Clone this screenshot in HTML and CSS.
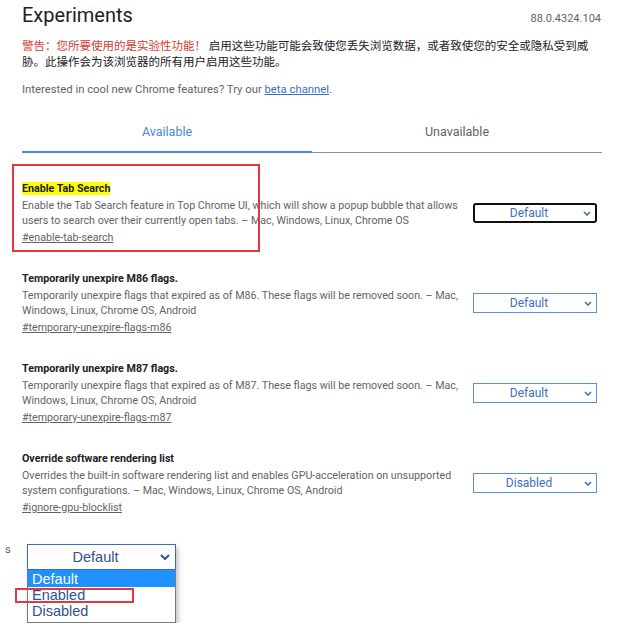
FILE: index.html
```html
<!DOCTYPE html>
<html lang="zh-CN">
<head>
    <meta charset="UTF-8">
    <title>Experiments</title>
    <link rel="stylesheet" href="styles.css">
</head>
<body>
<div class="page">
    <div class="header">
        <h1>Experiments</h1>
        <span class="version">88.0.4324.104</span>
    </div>
    <p class="warning"><span class="warn-red">警告：您所要使用的是实验性功能！</span> 启用这些功能可能会致使您丢失浏览数据，或者致使您的安全或隐私受到威胁。此操作会为该浏览器的所有用户启用这些功能。</p>
    <p class="promo">Interested in cool new Chrome features? Try our <a href="#">beta channel</a>.</p>

    <div class="tabs">
        <div class="tab active">Available</div>
        <div class="tab">Unavailable</div>
    </div>

    <ul class="flags">
        <li class="flag">
            <div class="flag-text">
                <h3><span class="mark">Enable Tab Search</span></h3>
                <p>Enable the Tab Search feature in Top Chrome UI, which will show a popup bubble that allows users to search over their currently open tabs. – Mac, Windows, Linux, Chrome OS</p>
                <a href="#">#enable-tab-search</a>
            </div>
            <div class="select focused">Default
                <svg class="chev" width="8" height="5" viewBox="0 0 8 5"><polyline points="1,1 4,4 7,1" fill="none" stroke="currentColor" stroke-width="1.6"/></svg>
            </div>
            <div class="note-box"></div>
        </li>
        <li class="flag">
            <div class="flag-text">
                <h3>Temporarily unexpire M86 flags.</h3>
                <p>Temporarily unexpire flags that expired as of M86. These flags will be removed soon. – Mac, Windows, Linux, Chrome OS, Android</p>
                <a href="#">#temporary-unexpire-flags-m86</a>
            </div>
            <div class="select">Default
                <svg class="chev" width="8" height="5" viewBox="0 0 8 5"><polyline points="1,1 4,4 7,1" fill="none" stroke="currentColor" stroke-width="1.6"/></svg>
            </div>
        </li>
        <li class="flag">
            <div class="flag-text">
                <h3>Temporarily unexpire M87 flags.</h3>
                <p>Temporarily unexpire flags that expired as of M87. These flags will be removed soon. – Mac, Windows, Linux, Chrome OS, Android</p>
                <a href="#">#temporary-unexpire-flags-m87</a>
            </div>
            <div class="select">Default
                <svg class="chev" width="8" height="5" viewBox="0 0 8 5"><polyline points="1,1 4,4 7,1" fill="none" stroke="currentColor" stroke-width="1.6"/></svg>
            </div>
        </li>
        <li class="flag">
            <div class="flag-text">
                <h3>Override software rendering list</h3>
                <p>Overrides the built-in software rendering list and enables GPU-acceleration on unsupported system configurations. – Mac, Windows, Linux, Chrome OS, Android</p>
                <a href="#">#ignore-gpu-blocklist</a>
            </div>
            <div class="select">Disabled
                <svg class="chev" width="8" height="5" viewBox="0 0 8 5"><polyline points="1,1 4,4 7,1" fill="none" stroke="currentColor" stroke-width="1.6"/></svg>
            </div>
        </li>
    </ul>
</div>

<div class="picker">
    <span class="picker-label">s</span>
    <div class="picker-box">
        <div class="picker-select">Default
            <svg class="chev" width="10" height="6" viewBox="0 0 10 6"><polyline points="1,1 5,5 9,1" fill="none" stroke="currentColor" stroke-width="2"/></svg>
        </div>
        <ul class="picker-list">
            <li class="on">Default</li>
            <li>Enabled</li>
            <li>Disabled</li>
        </ul>
    </div>
    <div class="note-box small"></div>
</div>
</body>
</html>
```

FILE: styles.css
```css
* {
    margin: 0;
    padding: 0;
}

ul {
    list-style: none;
}

body {
    font-family: Roboto, "Noto Sans CJK SC", sans-serif;
    color: #202124;
    background-color: #fff;
}

.page {
    width: 580px;
    padding: 0 32px 0 22px;
}

.header {
    display: flex;
    justify-content: space-between;
    align-items: baseline;
    padding-top: 3px;
}

.header h1 {
    font-size: 20px;
    font-weight: normal;
    line-height: 24px;
}

.version {
    font-size: 11px;
    color: #5f6368;
    margin-right: 1px;
}

.warning {
    margin-top: 11px;
    max-width: 572px;
    font-size: 11.5px;
    line-height: 16px;
    color: #202124;
}

.warn-red {
    color: #d23c32;
}

.promo {
    margin-top: 12px;
    font-size: 11.3px;
    line-height: 16px;
    color: #5f6368;
}

.promo a {
    color: #3b6fc4;
}

.tabs {
    display: flex;
    margin-top: 12px;
}

.tab {
    flex: 1;
    text-align: center;
    font-size: 12.5px;
    line-height: 16px;
    padding: 14px 0 12px;
    color: #5f6368;
    border-bottom: 1px solid #8f9399;
}

.tab.active {
    color: #4f84d4;
    padding-bottom: 11px;
    border-bottom: 2px solid #4a86e0;
}

.flags {
    margin-top: 28px;
}

.flag {
    display: flex;
    align-items: center;
    position: relative;
    margin-bottom: 26px;
}

.flag-text {
    width: 445px;
    font-size: 10.7px;
    line-height: 15px;
}

.flag-text h3 {
    font-size: 10.7px;
    font-weight: bold;
    color: #202124;
    margin-bottom: 2px;
}

.mark {
    background-color: #ffff00;
}

.flag-text p {
    color: #5f6368;
    margin-bottom: 2px;
}

.flag-text a {
    color: #5f6368;
}

.select {
    display: flex;
    align-items: center;
    justify-content: center;
    position: relative;
    width: 110px;
    height: 18px;
    margin-left: auto;
    margin-right: 5px;
    padding-right: 12px;
    box-sizing: content-box;
    border: 1px solid #5b8fd8;
    font-size: 12px;
    color: #3b6fc4;
}

.select.focused {
    border: 2px solid #111;
    border-radius: 3px;
    height: 16px;
    width: 108px;
}

.chev {
    position: absolute;
    right: 4px;
    top: 50%;
    margin-top: -2px;
}

.note-box {
    position: absolute;
    left: -10px;
    top: -17px;
    width: 244px;
    height: 84px;
    border: 2px solid #e0383e;
}

.picker {
    position: relative;
    display: flex;
    margin-top: 29px;
    padding-left: 5px;
}

.picker-label {
    width: 22px;
    font-size: 11px;
    line-height: 12px;
    color: #5f6368;
}

.picker-box {
    width: 149px;
    font-family: "Liberation Sans", Arial, sans-serif;
    box-shadow: 2px 3px 5px rgba(0, 0, 0, 0.25);
}

.picker-select {
    position: relative;
    height: 24px;
    line-height: 24px;
    border: 1px solid #3d6bb6;
    text-align: center;
    padding-right: 12px;
    font-size: 14.5px;
    color: #34508c;
}

.picker-select .chev {
    right: 5px;
    margin-top: -3px;
    color: #34508c;
}

.picker-list {
    border: 1px solid #7a7a7a;
    border-top: 0;
    padding-bottom: 3px;
    font-size: 14.5px;
    line-height: 16px;
    color: #34508c;
}

.picker-list li {
    padding-left: 4px;
}

.picker-list li.on {
    background-color: #1e90ff;
    color: #fff;
    padding-top: 1px;
}

.note-box.small {
    left: 15px;
    top: 44px;
    width: 115px;
    height: 11px;
}
```
